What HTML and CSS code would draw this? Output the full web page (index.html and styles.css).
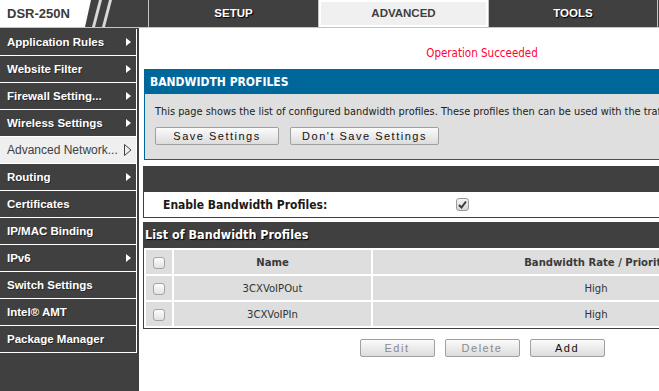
FILE: index.html
```html
<!DOCTYPE html>
<html lang="en">
  <head>
    <meta charset="UTF-8" />
    <meta name="viewport" content="width=device-width, initial-scale=1.0" />
    <title>Bandwidth Profiles</title>
    <link rel="stylesheet" href="styles.css">
  </head>
  <body>
    <div class="page">
      <div class="topbar">
        <div class="logo">
          <svg width="148" height="27" viewBox="0 0 148 27">
            <polygon points="0,0 91,0 85,27 0,27" fill="#ffffff" />
            <polygon points="99,0 102,0 95,27 92,27" fill="#d8d8d8" />
            <polygon points="109,0 112,0 105,27 102,27" fill="#d8d8d8" />
          </svg>
          <span class="logo-text">DSR-250N</span>
        </div>
        <div class="tab">SETUP</div>
        <div class="tab active">ADVANCED</div>
        <div class="tab last">TOOLS</div>
      </div>

      <div class="layout">
        <ul class="sidenav">
          <li>Application Rules <span class="arrow"></span></li>
          <li>Website Filter <span class="arrow"></span></li>
          <li>Firewall Setting... <span class="arrow"></span></li>
          <li>Wireless Settings <span class="arrow"></span></li>
          <li class="current">Advanced Network...
            <svg class="arrow-open" width="8" height="12" viewBox="0 0 8 12">
              <polygon points="0.5,0.5 7,6 0.5,11.5" fill="none" stroke="#404040" stroke-width="1" />
            </svg>
          </li>
          <li>Routing <span class="arrow"></span></li>
          <li>Certificates</li>
          <li>IP/MAC Binding</li>
          <li>IPv6 <span class="arrow"></span></li>
          <li>Switch Settings</li>
          <li>Intel® AMT</li>
          <li>Package Manager</li>
        </ul>

        <div class="main">
          <div class="msg">Operation Succeeded</div>

          <div class="panel">
            <div class="panel-head">BANDWIDTH PROFILES</div>
            <div class="panel-body">
              <div class="desc">This page shows the list of configured bandwidth profiles. These profiles then can be used with the traffic selectors to manage the bandwidth of each LAN host.</div>
              <div class="panel-buttons">
                <button class="btn btn-save">Save Settings</button>
                <button class="btn btn-dont">Don't Save Settings</button>
              </div>
            </div>
          </div>

          <div class="bar"></div>
          <div class="enable">
            <div class="enable-label">Enable Bandwidth Profiles:</div>
            <span class="cb checked">
              <svg width="11" height="11" viewBox="0 0 11 11">
                <path d="M2 6 L4.5 8.5 L9 2.5" fill="none" stroke="#3a3a3a" stroke-width="2" />
              </svg>
            </span>
          </div>

          <div class="bar list-head">List of Bandwidth Profiles</div>
          <table class="grid">
            <tr class="grid-head">
              <td class="col-check"><span class="cb"></span></td>
              <td class="col-name">Name</td>
              <td>Bandwidth Rate / Priority</td>
            </tr>
            <tr>
              <td><span class="cb"></span></td>
              <td>3CXVoIPOut</td>
              <td>High</td>
            </tr>
            <tr>
              <td><span class="cb"></span></td>
              <td>3CXVoIPIn</td>
              <td>High</td>
            </tr>
          </table>

          <div class="actions">
            <button class="btn btn-small disabled">Edit</button>
            <button class="btn btn-small disabled">Delete</button>
            <button class="btn btn-small">Add</button>
          </div>
        </div>
      </div>
    </div>
  </body>
</html>
```

FILE: styles.css
```css
* {
  box-sizing: border-box;
}
body {
  margin: 0;
  font-family: "Liberation Sans", Arial, sans-serif;
  background: #ffffff;
  overflow: hidden;
}
.page {
  width: 827px;
}

/* top bar */
.topbar {
  display: flex;
  height: 28px;
  background: #404040;
  border-bottom: 1px solid #c4c4c4;
}
.logo {
  position: relative;
  width: 148px;
  height: 27px;
}
.logo svg {
  display: block;
}
.logo-text {
  position: absolute;
  left: 7px;
  top: 6px;
  font-size: 13px;
  font-weight: bold;
  color: #3a3a3a;
}
.tab {
  width: 170px;
  height: 27px;
  border-left: 1px solid #c4c4c4;
  color: #ffffff;
  font-size: 11.5px;
  font-weight: bold;
  text-align: center;
  line-height: 27px;
  text-shadow: 1px 1px 1px #000000;
}
.tab.last {
  border-right: 1px solid #c4c4c4;
}
.tab.active {
  background: #f0f0f0;
  color: #404040;
  box-shadow: inset 0 0 0 2px #ffffff;
  text-shadow: none;
}

/* side navigation */
.layout {
  display: flex;
  min-height: 363px;
}
.sidenav {
  width: 139px;
  margin: 0;
  padding: 1px 0 0 0;
  list-style: none;
  background: #404040;
}
.sidenav li {
  display: flex;
  align-items: center;
  justify-content: space-between;
  width: 137px;
  height: 27px;
  padding: 0 5px 0 7px;
  border-right: 1px solid #ffffff;
  border-bottom: 1px solid #ffffff;
  color: #ffffff;
  font-size: 11.5px;
  font-weight: bold;
  text-shadow: 1px 1px 0 #2a2a2a;
}
.sidenav li.current {
  background: #efefef;
  color: #404040;
  font-size: 12px;
  font-weight: normal;
  text-shadow: none;
  padding-right: 4px;
}
.arrow {
  width: 0;
  height: 0;
  border-left: 5px solid #ffffff;
  border-top: 4px solid transparent;
  border-bottom: 4px solid transparent;
}

/* main area */
.main {
  width: 688px;
  padding: 0 6px 0 4px;
  font-family: "DejaVu Sans", Tahoma, sans-serif;
  font-stretch: condensed;
}
.msg {
  padding: 17px 0 8px;
  line-height: 16px;
  font-size: 11.5px;
  color: #ff0033;
  text-align: center;
}
.panel {
  margin-left: 1px;
  border: 1px solid #00679b;
  background: #dfdfdf;
}
.panel-head {
  height: 24px;
  line-height: 24px;
  padding-left: 5px;
  background: #00679b;
  color: #ffffff;
  font-size: 12px;
  font-weight: bold;
}
.panel-body {
  padding: 10px 10px 14px 10px;
}
.desc {
  line-height: 16px;
  font-size: 10.9px;
  color: #222222;
  white-space: nowrap;
}
.panel-buttons {
  display: flex;
  gap: 11px;
  margin-top: 7px;
}
.btn {
  height: 18px;
  padding: 0;
  border: 1px solid #a0a0a0;
  border-radius: 2px;
  background: linear-gradient(#fbfbfb, #dcdcdc);
  font-family: "Liberation Sans", Arial, sans-serif;
  font-size: 11px;
  letter-spacing: 1.5px;
  color: #111111;
}
.btn-save {
  width: 124px;
}
.btn-dont {
  width: 149px;
}
.btn-small {
  width: 75px;
}
.btn.disabled {
  color: #8a8a8a;
}

.bar {
  height: 26px;
  margin-top: 6px;
  background: #404040;
}
.enable {
  display: flex;
  align-items: center;
  height: 26px;
  border-left: 1px solid #404040;
  border-bottom: 1px solid #404040;
}
.enable-label {
  width: 312px;
  padding-left: 19px;
  font-size: 12px;
  font-weight: bold;
  color: #1a1a1a;
}
.list-head {
  margin-top: 4px;
  padding-left: 2px;
  line-height: 26px;
  color: #ffffff;
  font-size: 12.5px;
  font-weight: bold;
  text-shadow: 1px 1px 1px #000000;
}

.cb {
  display: inline-block;
  width: 12px;
  height: 12px;
  border: 1px solid #a4a4a4;
  border-radius: 3px;
  background: linear-gradient(#fdfdfd, #e2e2e2);
  vertical-align: middle;
}
.cb.checked {
  width: 13px;
  height: 13px;
  border-color: #9a9a9a;
  background: linear-gradient(#f4f4f4, #d6d6d6);
}
.cb svg {
  display: block;
}

.grid {
  width: 678px;
  border-collapse: separate;
  border-spacing: 2px;
  border-left: 1px solid #404040;
  border-bottom: 1px solid #404040;
}
.grid td {
  height: 24px;
  padding: 0;
  background: #dedede;
  text-align: center;
  font-size: 11.2px;
  color: #333333;
}
.grid-head td {
  font-weight: bold;
  color: #3a3a3a;
}
.grid td.col-check {
  width: 26px;
}
.grid td.col-name {
  width: 197px;
}

.actions {
  display: flex;
  justify-content: center;
  gap: 10px;
  margin-top: 10px;
}
```
